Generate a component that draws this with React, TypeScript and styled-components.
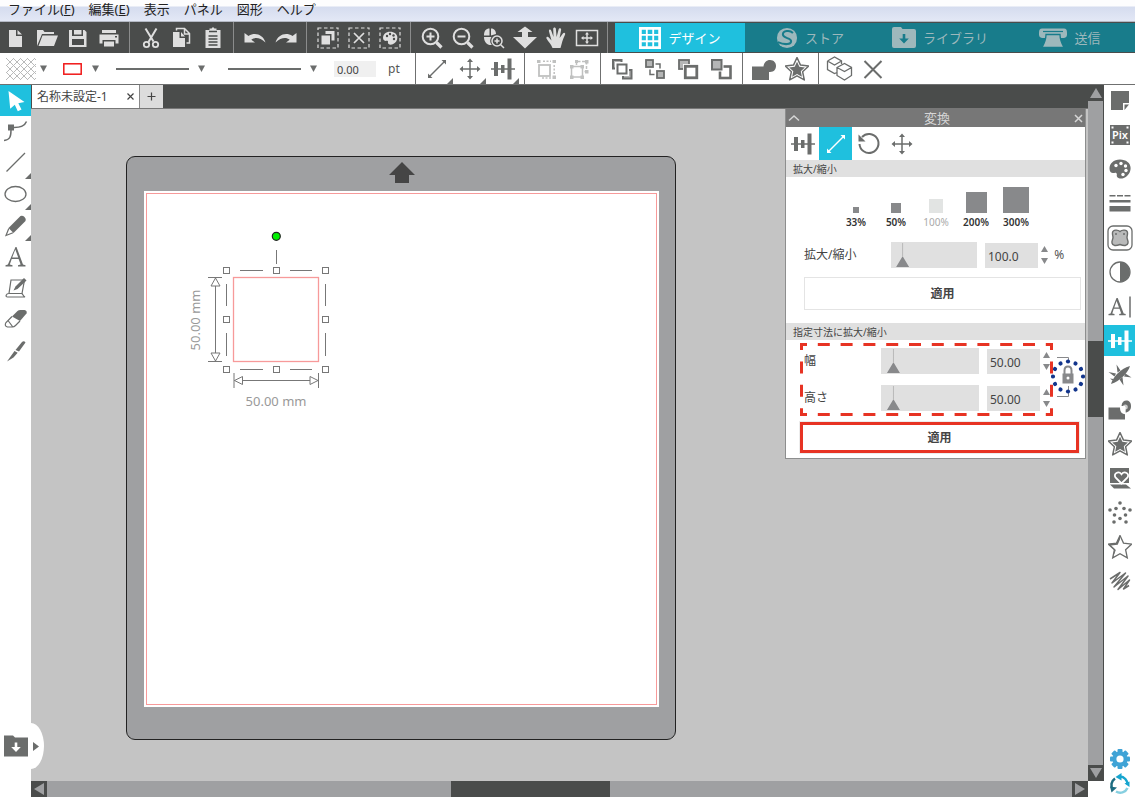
import React from "react";
import styled, { createGlobalStyle, css } from "styled-components";

const c = {
  dark: "#4a4c4b",
  cyan: "#1fc0de",
  teal: "#187c8b",
  mute: "#9db8bc",
  icon: "#6b6d6c",
  light: "#dfdfdf",
  track: "#9fa0a2",
  canvas: "#c4c4c4",
  field: "#e0e0e0",
  red: "#e73323",
};

const Global = createGlobalStyle`
  *, *::before, *::after { box-sizing: border-box; }
  body { margin: 0; background: #fff; color: #444; font: 12px/16px "Noto Sans", "Noto Sans CJK JP", sans-serif; }
  button, input { font: inherit; color: inherit; }
  button { border: 0; padding: 0; background: none; cursor: pointer; }
  svg { display: block; flex: none; }
`;

const Page = styled.div`
  display: flex;
  flex-direction: column;
  height: 100vh;
  min-height: 700px;
  overflow: hidden;
`;

const MenuBar = styled.nav`
  display: flex;
  flex: none;
  gap: 14px;
  height: 22px;
  padding: 0 8px 3px;
  background: linear-gradient(#fdfdfe 0 6px, #d5dcef 7px, #e2e7f5 20px);
  border-bottom: 1px solid #b4b9c4;
`;

const MenuItem = styled.button`
  font-size: 13px;
  line-height: 18px;
  color: #222;
  white-space: nowrap;
`;

const TopBar = styled.div`
  display: flex;
  flex: none;
  height: 31px;
  background: ${c.dark};
  color: ${c.light};
`;

const TopGroup = styled.div<{ $first?: boolean }>`
  display: flex;
  padding: 0 5px 0 ${(p) => (p.$first ? 0 : 5)}px;
  border-right: 1px solid #8b8c8c;
`;

const ToolButton = styled.button<{ $w?: number; $active?: boolean; $corner?: boolean }>`
  position: relative;
  display: flex;
  flex: none;
  align-items: center;
  justify-content: center;
  width: ${(p) => p.$w ?? 31}px;
  height: 31px;
  color: ${(p) => (p.$active ? "#fff" : "inherit")};
  background: ${(p) => (p.$active ? c.cyan : "transparent")};
  ${(p) =>
    p.$corner &&
    css`
      &::after {
        content: "";
        position: absolute;
        right: 0;
        bottom: 0;
        border: 3px solid ${c.icon};
        border-top-color: transparent;
        border-left-color: transparent;
      }
    `}
`;

const ModeTabs = styled.nav`
  display: grid;
  flex: 1;
  grid-template-columns: repeat(4, 1fr);
  margin: 1px 0 1px 7px;
  background: ${c.teal};
`;

const ModeTab = styled.button<{ $active?: boolean }>`
  display: flex;
  align-items: center;
  justify-content: center;
  gap: 7px;
  font-size: 13px;
  line-height: 20px;
  white-space: nowrap;
  color: ${(p) => (p.$active ? "#fff" : c.mute)};
  background: ${(p) => (p.$active ? c.cyan : "transparent")};
`;

const OptionBar = styled.div`
  display: flex;
  flex: none;
  height: 32px;
  border-bottom: 1px solid #6f7070;
  color: ${c.icon};
`;

const OptionGroup = styled.div`
  display: flex;
  padding: 0 5px 0 4px;
  border-right: 1px solid #6f7070;
  &:last-child { border-right: 0; }
`;

const StyleGroup = styled.div`
  display: flex;
  align-items: center;
  width: 416px;
  padding-left: 6px;
  border-right: 1px solid #6f7070;
`;

const StyleButton = styled.button<{ $gap: number; $after: number }>`
  display: flex;
  align-items: center;
  gap: ${(p) => p.$gap}px;
  height: 31px;
  margin-right: ${(p) => p.$after}px;
`;

const WeightInput = styled.input`
  width: 42px;
  height: 16px;
  margin-right: 12px;
  padding: 2px 3px 0;
  border: 0;
  background: #f0f0f0;
  font-size: 11px;
  color: #444;
`;

const Unit = styled.label`
  font-size: 12px;
  color: #555;
`;

const Body = styled.div`
  display: flex;
  flex: 1;
  min-height: 0;
`;

const SideBar = styled.aside`
  position: relative;
  display: flex;
  flex: none;
  flex-direction: column;
  justify-content: space-between;
  width: 31px;
  color: ${c.icon};
`;

const ToolStack = styled.div<{ $h: number }>`
  display: flex;
  flex-direction: column;
  justify-content: space-between;
  height: ${(p) => p.$h}px;
`;

const LibraryToggle = styled.button`
  position: relative;
  z-index: 2;
  display: flex;
  align-items: center;
  gap: 5px;
  width: 44px;
  height: 46px;
  margin-bottom: 28px;
  padding-left: 4px;
  color: inherit;
  background: #fff;
  border-radius: 0 13px 13px 0 / 0 23px 23px 0;
`;

const CloudTools = styled.div`
  display: flex;
  flex-direction: column;
  align-items: center;
  gap: 2px;
`;

const CloudButton = styled.button`
  display: flex;
`;

const Work = styled.main`
  display: flex;
  flex: 1;
  flex-direction: column;
  min-width: 0;
`;

const DocTabs = styled.div`
  display: flex;
  flex: none;
  height: 24px;
  padding-left: 1px;
  background: ${c.dark};
  border-bottom: 1px solid #777;
`;

const DocTab = styled.div`
  display: flex;
  align-items: center;
  justify-content: space-between;
  width: 108px;
  padding: 0 5px;
  background: #fff;
  border-right: 1px solid #888;
`;

const NewTab = styled.button`
  display: flex;
  align-items: center;
  justify-content: center;
  width: 23px;
  background: #dcdcdc;
`;

const TextButton = styled.button`
  display: flex;
`;

const Canvas = styled.div`
  display: flex;
  flex: 1;
  align-items: flex-start;
  justify-content: space-between;
  min-height: 0;
  padding-right: 2px;
  overflow: hidden;
  background: ${c.canvas};
`;

const Mat = styled.section`
  flex: none;
  width: 550px;
  margin: 47px 0 0 95px;
  padding: 0 16px 32px 17px;
  background: ${c.track};
  border: 1px solid #222;
  border-radius: 9px;
`;

const MatTop = styled.div`
  display: flex;
  justify-content: center;
  height: 34px;
  padding-top: 5px;
`;

const Sheet = styled.div`
  height: 516px;
  padding: 2px;
  background: #fff;
`;

const CutArea = styled.div`
  height: 100%;
  border: 1px solid #f79a9a;
`;

const VScroll = styled.div`
  display: flex;
  flex: none;
  flex-direction: column;
  width: 16px;
  margin-bottom: 16px;
  background: ${c.track};
  border-right: 1px solid ${c.dark};
`;

const HScroll = styled.div`
  display: flex;
  flex: none;
  height: 16px;
  background: ${c.track};
`;

const ScrollEnd = styled.button`
  display: flex;
  flex: none;
  align-items: center;
  justify-content: center;
  width: 16px;
  height: 16px;
  background: ${c.dark};
`;

const Grow = styled.div<{ $n: number; $thumb?: boolean }>`
  flex: ${(p) => p.$n} 1 0;
  background: ${(p) => (p.$thumb ? c.dark : "transparent")};
`;

const Panel = styled.section`
  flex: none;
  width: 301px;
  padding-bottom: 5px;
  background: #fff;
  border: solid #8d8e8e;
  border-width: 0 1px 1px;
`;

const PanelHeader = styled.header`
  display: flex;
  align-items: center;
  justify-content: space-between;
  height: 18px;
  padding: 0 2px;
  background: #777;
  color: #d6d6d6;
`;

const PanelTitle = styled.h2`
  margin: 0;
  font-size: 13px;
  font-weight: 400;
  line-height: 16px;
`;

const PanelTabs = styled.div`
  display: flex;
  height: 33px;
  color: ${c.icon};
`;

const PanelTab = styled(ToolButton)`
  height: 33px;
`;

const Section = styled.h3`
  height: 17px;
  margin: 0;
  padding: 0 7px;
  font-size: 10px;
  font-weight: 400;
  line-height: 18px;
  background: ${c.field};
`;

const Presets = styled.div`
  display: flex;
  margin: 9px 0 0 50px;
`;

const Preset = styled.button<{ $dim?: boolean }>`
  display: flex;
  flex-direction: column;
  align-items: center;
  justify-content: flex-end;
  gap: 2px;
  width: 40px;
  height: 43px;
  font-size: 10px;
  font-weight: ${(p) => (p.$dim ? 400 : 600)};
  line-height: 14px;
  color: ${(p) => (p.$dim ? "#aaa" : "#333")};
`;

const PresetSquare = styled.span<{ $s: number; $dim?: boolean }>`
  width: ${(p) => p.$s}px;
  height: ${(p) => p.$s}px;
  background: ${(p) => (p.$dim ? "#e2e4e3" : "#88898b")};
`;

const Field = styled.div<{ $slider: number }>`
  display: grid;
  grid-template-columns: 1fr ${(p) => p.$slider}px 53px 10px;
  align-items: center;
  height: 26px;
`;

const ScaleRow = styled.div`
  display: grid;
  grid-template-columns: 244px 1fr;
  align-items: center;
  margin: 13px 4px 0 18px;
`;

const FieldLabel = styled.label`
  font-size: 12px;
`;

const Range = styled.input`
  appearance: none;
  width: calc(100% - 8px);
  height: 26px;
  margin: 0;
  background: ${c.field};
  &::-webkit-slider-thumb {
    appearance: none;
    width: 13px;
    height: 24px;
    background: linear-gradient(#b8b8b8 14px, #88898b 14px);
    clip-path: polygon(6px 0, 7px 0, 7px 14px, 13px 24px, 0 24px, 6px 14px);
  }
`;

const NumberBox = styled.input`
  width: 53px;
  height: 25px;
  padding: 2px 3px 0;
  border: 0;
  background: ${c.field};
`;

const Spinner = styled.div`
  display: flex;
  flex-direction: column;
  align-items: flex-end;
  gap: 6px;
`;

const Apply = styled.button<{ $marked?: boolean }>`
  display: block;
  height: 33px;
  font-size: 12px;
  font-weight: 600;
  line-height: 16px;
  background: #fff;
  ${(p) =>
    p.$marked
      ? css`
          width: 279px;
          height: 31px;
          margin: 6px 0 0 14px;
          border: 3px solid ${c.red};
          outline: 1px solid #ececec;
        `
      : css`
          width: 277px;
          margin: 9px 0 13px 18px;
          border: 1px solid #e4e4e4;
        `}
`;

const SizeArea = styled.div`
  display: flex;
  margin: 3px 0 0 14px;
`;

const SizeFields = styled.div`
  position: relative;
  display: flex;
  flex-direction: column;
  gap: 11px;
  width: 253px;
  height: 73px;
  padding: 5px 3px 0 4px;
`;

const Marker = styled.svg`
  position: absolute;
  inset: 0;
  pointer-events: none;
`;

const LockButton = styled.button`
  width: 34px;
  height: 44px;
  margin: 12px 0 0 -2px;
  color: #88898b;
`;

type IconProps = { w?: number; h?: number; size?: number; children: React.ReactNode };
const Icon = ({ w = 24, h = 24, size, children }: IconProps) => (
  <svg width={size ?? w} height={size ?? h} viewBox={`0 0 ${w} ${h}`} fill="currentColor" aria-hidden="true">
    {children}
  </svg>
);

const line = { fill: "none", stroke: "currentColor", strokeWidth: 2 };
const thin = { fill: "none", stroke: "currentColor", strokeWidth: 1.5 };

const Down = ({ s = 7 }: { s?: number }) => (
  <Icon w={s} h={s}><path d={`M0 0.5H${s}L${s / 2} ${s}Z`} /></Icon>
);

const STAR = "M12 0.5l3.5 7.6 8.2 1-6.1 5.6 1.7 8.2L12 18.8l-7.3 4.1 1.7-8.2L0.3 9.1l8.2-1z";
const PALETTE =
  "M12 2.5C5.500 2.500 1.500 6.500 1.500 11.500c0 3 1.500 4.500 3.500 4.500 1.500 0 2.500-.8 3.500 .3 1 1.200-.5 2.500 .8 3.900 1.500 1.500 4 1.800 6.500 .8 4.500-1.800 6.800-6 6.800-10C22.600 6 18 2.500 12 2.500z";

const I: Record<string, React.ReactNode> = {
  doc: <Icon><path d="M5 4h7v6h6v11H5zM13.500 4l4.500 4.500h-4.500z" /></Icon>,
  open: <Icon><path d="M2 20V4h6l1.500 2H19v2H7zM7.500 9.500H23L19 20H3.500z" /></Icon>,
  save: <Icon><path d="M3 4h3v6h11V4h1.500l2 2v15H3zM8 4h7.500v4.500H8zM6 13v6h12v-6z" fillRule="evenodd" /></Icon>,
  print: (
    <Icon>
      <path d="M5 4h14v3H5zM2.500 8.500h19v9h-3V14h-13v3.500h-3zM7 15.500h10v5H7z" />
      <rect x="18" y="10" width="2" height="1.500" fill="#4a4c4b" />
    </Icon>
  ),
  cut: (
    <Icon>
      <path d="M6.500 2.500l8 13M17.500 2.500L9.500 16" {...line} />
      <circle cx="7.500" cy="18.500" r="2.700" {...thin} strokeWidth={1.8} />
      <circle cx="16.500" cy="18.500" r="2.700" {...thin} strokeWidth={1.8} />
    </Icon>
  ),
  copy: (
    <Icon>
      <path d="M3 6h6.500v6H15v9H3zM11 6l4 4.500h-4z" />
      <path d="M6.500 4.500v-2H14.500l5 5V17H16.500M14.500 2.500V8h5" {...thin} />
    </Icon>
  ),
  paste: (
    <Icon>
      <path d="M4.500 4h4V2.500h2L12 1l1.500 1.500h2V4h4v18h-15z" />
      <path d="M8 5.500h8M7.500 10h9M7.500 13h9M7.500 16h9M7.500 19h9" stroke="#4a4c4b" strokeWidth="1.300" />
    </Icon>
  ),
  undo: <Icon><path d="M1.500 7v9.500H12l-3.700-2.700C12 10.800 17 11.500 22.500 16.500 20 8.500 12 6 5.500 10z" /></Icon>,
  redo: <Icon><path d="M22.500 7v9.500H12l3.700-2.700C12 10.800 7 11.500 1.500 16.500 4 8.500 12 6 18.500 10z" /></Icon>,
  selAll: (
    <Icon>
      <rect x="2" y="2" width="20" height="20" {...thin} strokeWidth={1.2} strokeDasharray="3.500 2.500" />
      <path d="M9.500 5h9v9.500h-3V8h-6zM5.500 9.500h8.500v9H5.500z" />
    </Icon>
  ),
  desel: (
    <Icon>
      <rect x="2" y="2" width="20" height="20" {...thin} strokeWidth={1.2} strokeDasharray="3.500 2.500" />
      <path d="M7 7l10 10M17 7L7 17" {...line} strokeWidth={1.7} />
    </Icon>
  ),
  selColor: (
    <Icon>
      <rect x="2" y="2" width="20" height="20" {...thin} strokeWidth={1.2} strokeDasharray="3.500 2.500" />
      <path transform="translate(4 4) scale(.68)" d={PALETTE} />
      <g fill="#4a4c4b"><circle cx="9" cy="10" r="1.200" /><circle cx="12" cy="8" r="1.200" /><circle cx="15.500" cy="9.500" r="1.200" /><circle cx="16" cy="13" r="1.200" /></g>
    </Icon>
  ),
  zoomIn: <Icon><circle cx="10.500" cy="10.500" r="7.800" {...line} /><path d="M6.500 10.500h8M10.500 6.500v8" {...line} /><path d="M16.500 16.500l5 5" {...line} strokeWidth={3.2} /></Icon>,
  zoomOut: <Icon><circle cx="10.500" cy="10.500" r="7.800" {...line} /><path d="M6.500 10.500h8" {...line} /><path d="M16.500 16.500l5 5" {...line} strokeWidth={3.2} /></Icon>,
  zoomSel: (
    <Icon>
      <path d="M2 9.500C2 5 4 2.500 7.500 2.500v7zM9 2.500c3.500 0 5 2.500 5 5.500L9 9.500zM2 11h7.500c-2 3-1.500 6 .5 8C5 19.500 2 16 2 11z" />
      <circle cx="15" cy="15" r="5" {...thin} />
      <path d="M12.500 15h5M15 12.500v5M18.700 18.700l3.300 3.300" {...thin} />
    </Icon>
  ),
  updown: <Icon><path d="M12 .5l7.500 5.500H15v5h9L12 22.500 0 11h9V6H4.500z" /></Icon>,
  hand: (
    <Icon>
      <path d="M8.500 22c-1.500-4-4-6-6-9.500-.6-1.800 1.200-2.400 2.300-1l2.700 3L5 5.500C4.500 3.300 6.700 2.900 7.300 4.800L9.500 11 9.200 3c0-2 2.500-2 2.700 0l.7 8 2-7.500c.6-1.900 2.900-1.300 2.500 .6L15.600 12l3.300-4.500c1.200-1.500 2.900-.4 2.100 1.200-2.500 4.800-3 8.300-4.500 13.300z" />
    </Icon>
  ),
  fit: <Icon><rect x="1.500" y="4.500" width="21" height="15" {...thin} /><path d="M7 12h10M12 7v10" {...thin} /><path d="M6 12l2.500-2v4zM18 12l-2.500-2v4zM12 6l-2 2.500h4zM12 18l-2-2.500h4z" /></Icon>,
  grid: <Icon size={22}><path fillRule="evenodd" d="M0 0h24v24H0zM3 3v4.500h4.500V3zM9.500 3v4.500h5V3zM16.500 3v4.500H21V3zM3 9.500v5h4.500v-5zM9.500 9.500v5h5v-5zM16.500 9.500v5H21v-5zM3 16.500V21h4.500v-4.500zM9.500 16.500V21h5v-4.500zM16.500 16.500V21H21v-4.500z" /></Icon>,
  store: <Icon size={22}><circle cx="12" cy="12" r="11" /><path d="M18.500 6.500C15 3 7.500 4 7.500 8.300c0 4.500 9 3.200 9 7.200 0 3.500-6.500 4.500-14.500 1" fill="none" stroke="#187c8b" strokeWidth="2.200" /></Icon>,
  library: <Icon><path d="M0 3q0-2 2-2h7l1.500 2H22q2 0 2 2v15q0 2-2 2H2q-2 0-2-2z" /><path d="M10.700 8h2.600v4.500h3.500L12 17.500l-4.800-5h3.500z" fill="#187c8b" /></Icon>,
  send: (
    <Icon w={28}>
      <path d="M3 2.500h22q3 0 3 4v2q0 3-3 3.500H3q-3-.5-3-3.500v-2q0-4 3-4z" />
      <path d="M4 5.500h20" stroke="#187c8b" strokeWidth="1.200" />
      <path d="M7 8.500h14q0 6 4 13H3q4-7 4-13z" stroke="#187c8b" strokeWidth="1.300" />
    </Icon>
  ),
  hatch: (
    <Icon w={30} h={22}>
      {[-21, -14, -7, 0, 7, 14, 21, 28].map((x) => (
        <path key={x} d={`M${x} 0l22 22M${x + 22} 0l-22 22`} fill="none" stroke="#b9baba" />
      ))}
    </Icon>
  ),
  scale: <Icon><path d="M4.500 19.500l15-15" {...thin} /><path d="M3 21v-4.500L7.500 21zM21 3v4.500L16.500 3z" /></Icon>,
  move: <Icon><path d="M3 12h18M12 3v18" {...thin} /><path d="M1.500 12L5 9v6zM22.500 12L19 9v6zM12 1.500L9 5h6zM12 22.500L9 19h6z" /></Icon>,
  align: <Icon><path d="M0 11.200h24v1.600H0zM3 5h4v14H3zM10 8h3.500v8H10zM16.500 1.500h4v21h-4z" /></Icon>,
  group: (
    <Icon>
      <g opacity=".42">
        <rect x="5" y="8" width="11" height="11" {...line} strokeWidth={1.8} />
        <path d="M3 3h3.500v3H3zM18.500 3H22v3h-3.500zM18.500 18.500H22V22h-3.500z" />
        <path d="M9 4.200h8M20.200 8v9M8 21h9" {...thin} strokeDasharray="2 1.500" />
      </g>
    </Icon>
  ),
  ungroup: (
    <Icon>
      <g opacity=".42">
        <rect x="4.500" y="9.500" width="11" height="10.500" {...thin} />
        <path d="M9.500 8V4.500h10v10h-3" {...thin} strokeDasharray="3 1.500" />
        <path d="M3 8h3.500v3.500H3zM13.500 8H17v3.500h-3.500zM3 18.500h3.500V22H3zM13.500 18.500H17V22h-3.500zM8 3h3v3H8zM18 3h3.500v3.500H18zM18 13h3.500v3.500H18z" />
      </g>
    </Icon>
  ),
  front: (
    <Icon>
      <rect x="3" y="3" width="8.500" height="8.500" fill="#b5b6b6" stroke="currentColor" strokeWidth="2" />
      <rect x="13" y="13" width="8.500" height="8.500" fill="#b5b6b6" stroke="currentColor" strokeWidth="2" />
      <rect x="7" y="7" width="10" height="10" fill="#fff" stroke="#fff" strokeWidth="4" />
      <rect x="7.500" y="7.500" width="9" height="9" fill="#fff" stroke="currentColor" strokeWidth="2" />
    </Icon>
  ),
  forward: <Icon><rect x="3" y="3" width="7" height="7" fill="#b5b6b6" stroke="currentColor" strokeWidth="1.800" /><rect x="14" y="14" width="7" height="7" fill="#b5b6b6" stroke="currentColor" strokeWidth="1.800" /><path d="M12.500 7H17v4.500M7 12.500v5h4.500" {...thin} /></Icon>,
  backward: (
    <Icon>
      <rect x="3" y="3" width="10" height="9" fill="#b5b6b6" stroke="currentColor" strokeWidth="1.800" />
      <rect x="7" y="7" width="15.500" height="15.500" fill="#fff" />
      <rect x="9.300" y="9.300" width="11.500" height="11.500" fill="#fff" stroke="currentColor" strokeWidth="2.800" />
    </Icon>
  ),
  back: (
    <Icon>
      <rect x="11" y="9.500" width="10.500" height="11.500" {...line} strokeWidth={2.6} />
      <rect x="1" y="1" width="13.500" height="13.500" fill="#fff" />
      <rect x="3" y="3" width="9.500" height="9.500" fill="#b5b6b6" stroke="currentColor" strokeWidth="2" />
    </Icon>
  ),
  weld: <Icon w={26}><path d="M1 9.500h11.500C13 5.500 15.500 3 19 3c8 0 8 12 0 12h-1v8H1z" /></Icon>,
  star2: <Icon><path d={STAR} {...thin} strokeLinejoin="round" strokeWidth={1.5} /><path transform="translate(4 4.300) scale(.67)" d={STAR} /></Icon>,
  cubes: <Icon w={28} h={28}><path d="M1.500 6l7-4 7 4v3M1.500 6v8.500l7 4 2.500-1M1.500 6l7 4 7-4M11 12.500l7.500-4 7 4v8l-7 4.500-7.500-4.500zM11 12.500l7.500 4 7-4" {...thin} strokeWidth={1.3} /></Icon>,
  cross: <Icon><path d="M3.500 4l17 17M20.500 4l-17 17" {...line} /></Icon>,
  pointer: <Icon><path d="M4.500 2l16 11-6.200 1.200 3.200 6.300-3.700 1.700-3-6.400-4.600 4z" /></Icon>,
  node: <Icon><path d="M0 20.500c6-.5 7-4 7-10.500M10 7.500c6 0 10.500-1 12.500-6" {...thin} /><path d="M4 4.500h6v6H4z" /></Icon>,
  line: <Icon><path d="M2.500 20.500L21 2" {...thin} strokeWidth={1.2} /></Icon>,
  ellipse: <Icon><ellipse cx="11.500" cy="12" rx="10.500" ry="7.500" {...thin} strokeWidth={1.3} /></Icon>,
  pencil: <Icon><path d="M4.500 14L16.500 2q2-1 4 1t1 4L9.500 19z" /><path d="M4.800 14.500L2 21.500l7-2.800" {...thin} strokeWidth={1.2} /></Icon>,
  text: <Icon><path d="M11.500 2h1l6.500 17.500 2.500 .7v1.300h-7.500v-1.300l2.600-.7-2-5.500H7.700l-1.900 5.500 2.700 .7v1.300H1.500v-1.300l2.400-.7zM8.200 12.500h6L11.300 4.500z" fillRule="evenodd" /></Icon>,
  sketch: <Icon><path d="M7 4h13.500L18 17.500H5zM5 17.500c-3 0-4 3.500-1.500 3.500H21c-2-1-2-2.500-3-3.500" {...thin} strokeWidth={1.2} /><path d="M9.500 14.500l2-4L20 2l2.500 2.500-9 8.500z" /></Icon>,
  eraser: <Icon><path d="M8 9.500L13.500 4q1-1 3-1h4q3 .5 2 3.500L16 14z" /><path d="M8 9.500l-6 6q-2 3.500 1.500 4.500h5q1.500 0 3-1.500L16 14M8.500 19.500L4 13.500" {...thin} strokeWidth={1.2} /></Icon>,
  knife: <Icon><path d="M11.500 11L18 3q2-1.500 3.500 .5L15 12.500zM10.500 12l3.200 1.800L9.500 18.500 3 22.500z" /></Icon>,
  page: <Icon><path d="M3 2h18v12h-6v7H3zM16.500 15.500H21L16.500 21z" /></Icon>,
  palette: <Icon><path d={PALETTE} /><g fill="#fff"><circle cx="8" cy="8.500" r="1.700" /><circle cx="13" cy="6.500" r="1.700" /><circle cx="17.500" cy="9" r="1.700" /><circle cx="18" cy="13.500" r="1.700" /><circle cx="15" cy="17.500" r="1.700" /></g></Icon>,
  lines: <Icon><path d="M1.500 3h6v1.500h-6zM9 3h6v1.500H9zM16.500 3h6v1.500h-6zM1.500 8h21v2.500h-21zM1.500 14h21v5.500h-21z" /></Icon>,
  trace: (
    <Icon w={26} h={26}>
      <rect x="1" y="1" width="24" height="24" rx="5" {...thin} strokeWidth={1.3} />
      <path d="M13 6.500c2-2 7-2 7.500 1 .3 2-.5 3-.5 5s1.500 3 1 5.500c-.6 3-4 3-8 1.500-4 1.500-7.400 1.500-8-1.500-.5-2.500 1-3.500 1-5.500s-.8-3-.5-5c.5-3 5.500-3 7.500-1z" fill="#b9baba" stroke="currentColor" strokeWidth="1.400" />
      <circle cx="9" cy="9" r="1" /><circle cx="17" cy="9" r="1" />
    </Icon>
  ),
  contrast: <Icon><circle cx="12" cy="12" r="10" {...thin} strokeWidth={1.3} /><path d="M12 2a10 10 0 010 20z" /></Icon>,
  textStyle: <Icon><path d="M8.500 3h1.200l6 15.500 2 .6v1.200h-6.500v-1.200l2-.6-1.700-4.700H5.800L4.300 18.500l2.200 .6v1.200H0.500v-1.200l2-.6zM6.300 12.500h4.700L8.600 6z" fillRule="evenodd" /><path d="M22 1.500v21" {...thin} /></Icon>,
  replicate: (
    <Icon>
      <path d="M3 21C5 14 12 6 22 3 20 10 12 18 3 21z" />
      <path d="M8.500 1.500l4 6-3 2zM.5 9l7.500 1.500-1.500 3zM15.500 22.500l-4-6 3-2.500zM23.500 14.500l-7.500-1 1.500-3zM2 15.500l3.500 .5-1 1.500z" />
    </Icon>
  ),
  modify: <Icon><path d="M.5 9.500H12c0 5 2.500 6.500 5 6.800V21.500H.5z" /><path d="M13.500 8C14 .5 23.500 1 23 8.500c0 3.500-2.500 6-6 6V8z" /><path d="M12.500 9.500H17v5.500" fill="none" stroke="#fff" strokeWidth="1.300" /><circle cx="17.300" cy="9" r="2.500" fill="#fff" opacity=".65" /></Icon>,
  heart: <Icon><path d="M2 2h19v15H2zM2 18.500h16l5 4H6z" /><path d="M13.500 17.500l-6-6c-2.500-4 3-7 6-3.200 3-3.800 8.500-.8 6 3.200z" stroke="#fff" strokeWidth="1.800" /></Icon>,
  dots: (
    <Icon>
      {[[12, 2], [8, 7.5], [16, 7.5], [2, 9], [22, 9], [6.500, 14], [17.500, 14], [12, 17.5], [6, 21], [18, 21]].map(([x, y]) => (
        <circle key={`${x}-${y}`} cx={x} cy={y} r="1.800" />
      ))}
    </Icon>
  ),
  star: <Icon><path d={STAR} {...thin} strokeWidth={1.3} /><path d="M12 .5v4L9.700 9.800 3 10.500l4.800 4.400L5 22.500l1.500-7.800L.3 9.100l8.200-1z" /></Icon>,
  scribble: <Icon><path d="M2 10L12 3.500 4 14 17.500 4 6 18 20 7 10 20.500 21.500 11 15.500 20l5.500-3.500" {...thin} strokeLinejoin="round" /></Icon>,
  folder: <Icon><path d="M0 1.500h9L11 3.500h13v19H0z" /><path d="M10.700 8.500h2.600V13h3.500L12 18l-4.800-5h3.500z" fill="#fff" /></Icon>,
  rotate: <Icon><path d="M5 5a9.500 9.500 0 11-2.500 7" {...line} /><path d="M1.500 2.500v7h7z" /></Icon>,
  pix: (
    <Icon>
      <rect x="2" y="2" width="20" height="20" />
      <path d="M3.500 3.500h2v2h-2zM18.500 3.500h2v2h-2zM3.500 18.500h2v2h-2zM18.500 18.500h2v2h-2z" fill="#fff" />
      <text x="12" y="16" fill="#fff" fontSize="11" fontWeight="600" textAnchor="middle">Pix</text>
    </Icon>
  ),
  gear: (
    <Icon>
      <g fill="#3fa3d6">
        {[0, 45, 90, 135].map((a) => (
          <rect key={a} x="9.500" y="2" width="5" height="20" rx="1" transform={`rotate(${a} 12 12)`} />
        ))}
        <circle cx="12" cy="12" r="7.500" />
      </g>
      <circle cx="12" cy="12" r="3.600" fill="#fff" />
    </Icon>
  ),
  sync: (
    <Icon>
      <g fill="none" strokeWidth="2.500">
        <path d="M12 3.500a8 8 0 017.500 8" stroke="#16a5cf" />
        <path d="M19.500 15A8 8 0 018 18.500" stroke="#86cfe0" />
        <path d="M5 17A8 8 0 017 5.500" stroke="#1d6c80" />
      </g>
      <path d="M13.500 0v7.500L7.500 4z" fill="#16a5cf" />
      <path d="M16.500 10.500L21.500 14V8.500z" fill="#16a5cf" />
      <path d="M2 13.500l7 1-5.500 5z" fill="#1d6c80" />
    </Icon>
  ),
};

const topGroups: [string, string][][] = [
  [["doc", "新規"], ["open", "開く"], ["save", "保存"], ["print", "印刷"]],
  [["cut", "切り取り"], ["copy", "コピー"], ["paste", "貼り付け"]],
  [["undo", "元に戻す"], ["redo", "やり直し"]],
  [["selAll", "すべて選択"], ["desel", "選択解除"], ["selColor", "色で選択"]],
  [["zoomIn", "拡大"], ["zoomOut", "縮小"], ["zoomSel", "選択範囲を拡大"], ["updown", "ズームドラッグ"], ["hand", "パン"], ["fit", "ページに合わせる"]],
];

const optionGroups: [string, string, boolean?][][] = [
  [["scale", "拡大縮小", true], ["move", "移動", true], ["align", "整列", true]],
  [["group", "グループ化"], ["ungroup", "グループ解除"]],
  [["front", "最前面へ"], ["forward", "前面へ"], ["backward", "背面へ"], ["back", "最背面へ"]],
  [["weld", "溶接"], ["star2", "オフセット"]],
  [["cubes", "複製"], ["cross", "削除"]],
];

const leftTools: [string, string, boolean?][] = [
  ["pointer", "選択"], ["node", "ポイント編集"], ["line", "線", true], ["ellipse", "楕円", true], ["pencil", "フリーハンド", true],
  ["text", "テキスト"], ["sketch", "スケッチ"], ["eraser", "消しゴム"], ["knife", "ナイフ"],
];

const rightTools: [string, string][] = [
  ["page", "ページ設定"], ["pix", "PixScan"], ["palette", "塗りつぶし"], ["lines", "線スタイル"], ["trace", "トレース"], ["contrast", "画像効果"],
  ["textStyle", "テキストスタイル"], ["align", "変換"], ["replicate", "複製"], ["modify", "編集"], ["star2", "オフセット"], ["heart", "ポップアップ"],
  ["dots", "ラインストーン"], ["star", "スケッチ"], ["scribble", "スティップル"],
];

const menus: [string, string?][] = [["ファイル", "F"], ["編集", "E"], ["表示"], ["パネル"], ["図形"], ["ヘルプ"]];

const modes: [string, string][] = [["grid", "デザイン"], ["store", "ストア"], ["library", "ライブラリ"], ["send", "送信"]];

const presets = [
  { label: "33%", size: 6 },
  { label: "50%", size: 10 },
  { label: "100%", size: 14, dim: true },
  { label: "200%", size: 21 },
  { label: "300%", size: 26 },
];

const Arrow = ({ d }: { d: string }) => (
  <svg width="12" height="12" viewBox="0 0 12 12" aria-hidden="true"><path d={d} fill={c.track} /></svg>
);

const Spin = ({ name }: { name: string }) => (
  <Spinner>
    <TextButton aria-label={`${name}を増やす`}><Icon w={7} h={6}><path d="M0 6L3.500 0 7 6z" fill="#88898b" /></Icon></TextButton>
    <TextButton aria-label={`${name}を減らす`}><Icon w={7} h={6}><path d="M0 0L3.500 6 7 0z" fill="#88898b" /></Icon></TextButton>
  </Spinner>
);

const ValueField = ({ id, label, value, slider }: { id: string; label: string; value: string; slider: number }) => (
  <Field $slider={slider}>
    <FieldLabel htmlFor={id}>{label}</FieldLabel>
    <Range type="range" aria-label={label} defaultValue={7} />
    <NumberBox id={id} type="text" defaultValue={value} />
    <Spin name={label} />
  </Field>
);

const Selection = () => (
  <svg width="511" height="510" viewBox="147 194 511 510" role="img" aria-label="選択中の正方形">
    <rect x="233.500" y="277.500" width="85" height="84" fill="none" stroke="#f79a9a" strokeWidth="1.300" />
    <g fill="none" stroke="#777">
      <path d="M240 270.500h23M290 270.500h22M240 369.500h23M290 369.500h22M226.500 284v22M226.500 333v23M325.500 284v22M325.500 333v23M276.500 250v14" />
      <path d="M208 277.500h14M208 361.500h14M215.500 277.500v84M234 373v15M318.500 373v15M234 380.500h84" />
      <path d="M215.500 278l-4.500 8h9zM215.500 361l-4.500-8h9zM234.500 380.500l8-4v8zM318 380.500l-8-4v8z" fill="#fff" />
      {[226.500, 276.500, 325.500].map((x) =>
        [270.500, 319.500, 369.500].filter((y) => !(x === 276.500 && y === 319.500)).map((y) => (
          <rect key={`${x}${y}`} x={x - 3} y={y - 3} width="6" height="6" fill="#fff" />
        ))
      )}
    </g>
    <circle cx="276.300" cy="236.300" r="4" fill="#00f000" stroke="#222" strokeWidth="1.200" />
    <g fill="#999" fontSize="13" textAnchor="middle">
      <text x="276" y="406">50.00 mm</text>
      <text transform="translate(200 320) rotate(-90)">50.00 mm</text>
    </g>
  </svg>
);

const TransformPanel = () => (
  <Panel>
    <PanelHeader>
      <TextButton aria-label="折りたたむ"><Icon w={12} h={12}><path d="M1 8.500l5-4.500 5 4.500" {...thin} /></Icon></TextButton>
      <PanelTitle>変換</PanelTitle>
      <TextButton aria-label="閉じる"><Icon w={9} h={9}><path d="M1 1l7 7M8 1L1 8" {...thin} /></Icon></TextButton>
    </PanelHeader>
    <PanelTabs>
      {[["align", "整列"], ["scale", "拡大縮小"], ["rotate", "回転"], ["move", "移動"]].map(([k, t]) => (
        <PanelTab key={k} $w={33} $active={k === "scale"} aria-label={t}>{I[k]}</PanelTab>
      ))}
    </PanelTabs>
    <Section>拡大/縮小</Section>
    <Presets>
      {presets.map((p) => (
        <Preset key={p.label} $dim={p.dim}>
          <PresetSquare $s={p.size} $dim={p.dim} />
          {p.label}
        </Preset>
      ))}
    </Presets>
    <ScaleRow>
      <ValueField id="scale" label="拡大/縮小" value="100.0" slider={94} />
      <Unit htmlFor="scale">&nbsp;&nbsp;%</Unit>
    </ScaleRow>
    <Apply>適用</Apply>
    <Section>指定寸法に拡大/縮小</Section>
    <SizeArea>
      <SizeFields>
        <ValueField id="width" label="幅" value="50.00" slider={106} />
        <ValueField id="height" label="高さ" value="50.00" slider={106} />
        <Marker width="253" height="73" viewBox="0 0 253 73" fill="none" stroke={c.red} strokeWidth="3" aria-hidden="true">
          <path d="M0 1.500h253M0 71.500h253" strokeDasharray="12 10.800" strokeDashoffset="5" />
          <path d="M1.500 0v73M251.500 0v73" strokeDasharray="12 11.400" strokeDashoffset="5" />
        </Marker>
      </SizeFields>
      <LockButton aria-label="縦横比を固定">
        <svg width="34" height="44" viewBox="0 0 34 44" aria-hidden="true">
          <path d="M6 2.500h11.500v5M17.500 31v10.500H6" fill="none" stroke="currentColor" />
          <path d="M13.500 20v-4.500q0-4 3.500-4t3.500 4V20" fill="none" stroke="currentColor" strokeWidth="2" />
          <rect x="11.500" y="18.500" width="11" height="10" fill="currentColor" />
          <circle cx="17" cy="23" r="1.500" fill="#fff" />
          <g fill="#12358c">
            {Array.from({ length: 12 }, (_, i) => (
              <circle key={i} cx="17" cy="6.500" r="2.100" transform={`rotate(${i * 30} 17 21.500)`} />
            ))}
          </g>
        </svg>
      </LockButton>
    </SizeArea>
    <Apply $marked>適用</Apply>
  </Panel>
);

export default function App() {
  return (
    <Page>
      <Global />
      <MenuBar>
        {menus.map(([t, k]) => (
          <MenuItem key={t}>{t}{k && <>(<u>{k}</u>)</>}</MenuItem>
        ))}
      </MenuBar>
      <TopBar>
        {topGroups.map((g, i) => (
          <TopGroup key={i} $first={i === 0}>
            {g.map(([k, t]) => <ToolButton key={k} aria-label={t}>{I[k]}</ToolButton>)}
          </TopGroup>
        ))}
        <ModeTabs>
          {modes.map(([k, t]) => <ModeTab key={k} $active={k === "grid"}>{I[k]}{t}</ModeTab>)}
        </ModeTabs>
      </TopBar>
      <OptionBar>
        <StyleGroup>
          <StyleButton $gap={4} $after={16} aria-label="塗りつぶしパターン">{I.hatch}<Down /></StyleButton>
          <StyleButton $gap={10} $after={17} aria-label="線の色">
            <Icon w={19} h={12}><rect x=".8" y=".8" width="17.400" height="10.400" fill="none" stroke="#f01818" strokeWidth="1.500" /></Icon>
            <Down />
          </StyleButton>
          <StyleButton $gap={9} $after={23} aria-label="線種"><Icon w={73} h={2}><path d="M0 0h73v2H0z" /></Icon><Down /></StyleButton>
          <StyleButton $gap={9} $after={17} aria-label="線の太さ"><Icon w={73} h={2}><path d="M0 0h73v2H0z" /></Icon><Down /></StyleButton>
          <WeightInput id="weight" type="text" defaultValue="0.00" />
          <Unit htmlFor="weight">pt</Unit>
        </StyleGroup>
        {optionGroups.map((g, i) => (
          <OptionGroup key={i}>
            {g.map(([k, t, more]) => <ToolButton key={k} $w={33} $corner={more} aria-label={t}>{I[k]}</ToolButton>)}
          </OptionGroup>
        ))}
      </OptionBar>
      <Body>
        <SideBar>
          <ToolStack $h={281}>
            {leftTools.map(([k, t, more]) => (
              <ToolButton key={k} $active={k === "pointer"} $corner={more} aria-label={t}>{I[k]}</ToolButton>
            ))}
          </ToolStack>
          <LibraryToggle aria-label="ライブラリを開く">
            {I.folder}
            <Icon w={6} h={9}><path d="M0 0l6 4.500L0 9z" /></Icon>
          </LibraryToggle>
        </SideBar>
        <Work>
          <DocTabs>
            <DocTab>
              名称未設定-1
              <TextButton aria-label="タブを閉じる"><Icon w={7} h={7}><path d="M.5 .5l6 6M6.500 .5l-6 6" {...thin} strokeWidth={1.2} /></Icon></TextButton>
            </DocTab>
            <NewTab aria-label="新しいタブ"><Icon w={9} h={9}><path d="M.5 4.500h8M4.500 .5v8" {...thin} strokeWidth={1.2} /></Icon></NewTab>
          </DocTabs>
          <Canvas>
            <Mat>
              <MatTop>
                <Icon w={26} h={21}><path d="M13 0l13 13h-6v8H6v-8H0z" fill="#454545" /></Icon>
              </MatTop>
              <Sheet>
                <CutArea><Selection /></CutArea>
              </Sheet>
            </Mat>
            <TransformPanel />
          </Canvas>
          <HScroll>
            <ScrollEnd aria-label="左へ"><Arrow d="M11 0v12L1 6z" /></ScrollEnd>
            <Grow $n={404} /><Grow $n={159} $thumb /><Grow $n={462} />
            <ScrollEnd aria-label="右へ"><Arrow d="M1 0v12l10-6z" /></ScrollEnd>
          </HScroll>
        </Work>
        <VScroll>
          <ScrollEnd aria-label="上へ"><Arrow d="M0 11h12L6 1z" /></ScrollEnd>
          <Grow $n={240} /><Grow $n={76} $thumb /><Grow $n={348} />
          <ScrollEnd aria-label="下へ"><Arrow d="M0 1h12L6 11z" /></ScrollEnd>
        </VScroll>
        <SideBar>
          <ToolStack $h={512}>
            {rightTools.map(([k, t]) => (
              <ToolButton key={k} $active={k === "align"} aria-label={t}>{I[k]}</ToolButton>
            ))}
          </ToolStack>
          <CloudTools>
            <CloudButton aria-label="設定">{I.gear}</CloudButton>
            <CloudButton aria-label="同期">{I.sync}</CloudButton>
          </CloudTools>
        </SideBar>
      </Body>
    </Page>
  );
}
